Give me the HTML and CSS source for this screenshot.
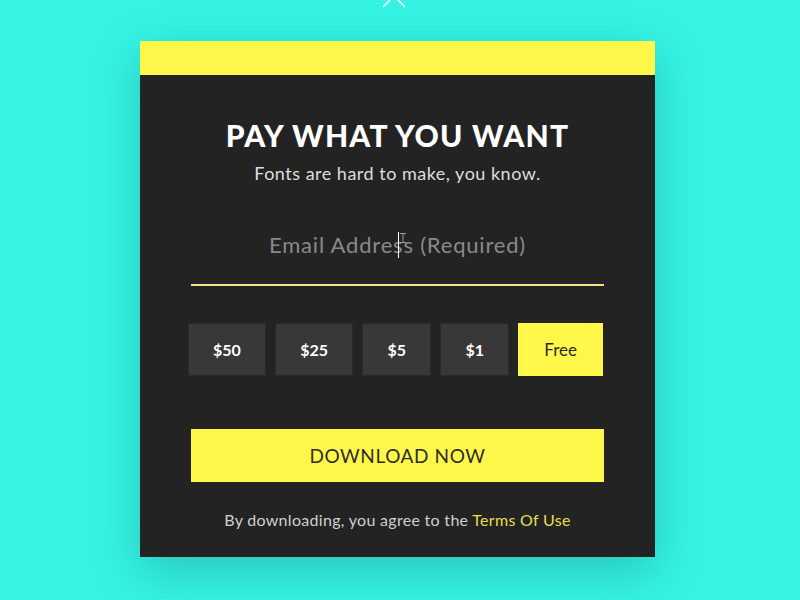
FILE: index.html
```html
<!DOCTYPE html>
<html lang="en">
<head>
<meta charset="utf-8">
<title>Pay What You Want</title>
<link rel="stylesheet" href="styles.css">
</head>
<body>
<div class="page">
  <svg class="close" width="30" height="30" viewBox="0 0 30 30" aria-label="Close">
    <path d="M4 4 L26 26 M26 4 L4 26" stroke="#ffffff" stroke-width="1.6" fill="none"/>
  </svg>
  <div class="card">
    <div class="band"></div>
    <div class="content">
      <h1 class="title">PAY WHAT YOU WANT</h1>
      <p class="subtitle">Fonts are hard to make, you know.</p>
      <div class="field">
        <span class="placeholder">Email Address (Required)</span>
        <span class="caret"></span>
        <svg class="ibeam" width="6" height="10" viewBox="0 0 6 10"><path d="M0 0.5 H6 M3 0.5 V9.5 M0 9.5 H6" stroke="#9a9a9a" stroke-width="1" fill="none"/></svg>
      </div>
      <div class="amounts">
        <button class="amount">$50</button>
        <button class="amount">$25</button>
        <button class="amount">$5</button>
        <button class="amount">$1</button>
        <button class="amount amount-free">Free</button>
      </div>
      <button class="download">DOWNLOAD NOW</button>
      <p class="terms">By downloading, you agree to the <a class="terms-link" href="#">Terms Of Use</a></p>
    </div>
  </div>
</div>
</body>
</html>
```

FILE: styles.css
```css
* { box-sizing: border-box; }
html, body {
  margin: 0;
  padding: 0;
  width: 800px;
  height: 600px;
  overflow: hidden;
  background: #35f4e4;
  font-family: "Lato", "Noto Sans", sans-serif;
}
.page {
  position: relative;
  width: 800px;
  height: 600px;
  padding-top: 41px;
}
.close {
  position: absolute;
  left: 379px;
  top: -19px;
}
.card {
  width: 515px;
  margin-left: 140px;
  background: #232323;
  box-shadow: 0 14px 45px rgba(0, 80, 75, 0.28);
}
.band {
  height: 34px;
  background: #fff84a;
}
.content {
  padding: 40px 0 27px;
  display: flex;
  flex-direction: column;
  align-items: center;
}
.title {
  margin: 0;
  font-size: 30px;
  line-height: 40px;
  font-weight: 900;
  letter-spacing: 1.2px;
  color: #ffffff;
}
.subtitle {
  margin: 7px 0 0;
  font-size: 18px;
  line-height: 22px;
  color: #dedede;
  letter-spacing: 0.5px;
}
.field {
  position: relative;
  margin-top: 37px;
  width: 413px;
  height: 65px;
  padding-top: 11px;
  border-bottom: 2px solid #eee686;
  text-align: center;
}
.placeholder {
  font-size: 22px;
  line-height: 26px;
  color: #8a8a8a;
  letter-spacing: 0.8px;
}
.caret {
  position: absolute;
  left: 207px;
  top: 11px;
  width: 1px;
  height: 26px;
  background: #ffffff;
}
.ibeam {
  position: absolute;
  left: 209px;
  top: 12px;
}
.amounts {
  margin-top: 37px;
  margin-right: 4px;
  width: 415px;
  display: flex;
  justify-content: space-between;
}
.amount {
  height: 53px;
  padding: 0 24px;
  border: 1px solid #2a2a2a;
  background: #383838;
  color: #ffffff;
  font-family: inherit;
  font-size: 16px;
  font-weight: 700;
  cursor: pointer;
}
.amount-free {
  padding: 0 25px;
  background: #fff84a;
  border-color: #fff84a;
  color: #2a2a2a;
  font-size: 17px;
  font-weight: 400;
}
.download {
  margin-top: 53px;
  width: 413px;
  height: 53px;
  border: none;
  background: #fff84a;
  color: #2d2d2d;
  font-family: inherit;
  font-size: 19px;
  letter-spacing: 0.6px;
  cursor: pointer;
}
.terms {
  margin: 28px 0 0;
  font-size: 16px;
  line-height: 20px;
  color: #cfcfcf;
  letter-spacing: 0.3px;
}
.terms-link {
  color: #e7df4c;
  text-decoration: none;
}
```
